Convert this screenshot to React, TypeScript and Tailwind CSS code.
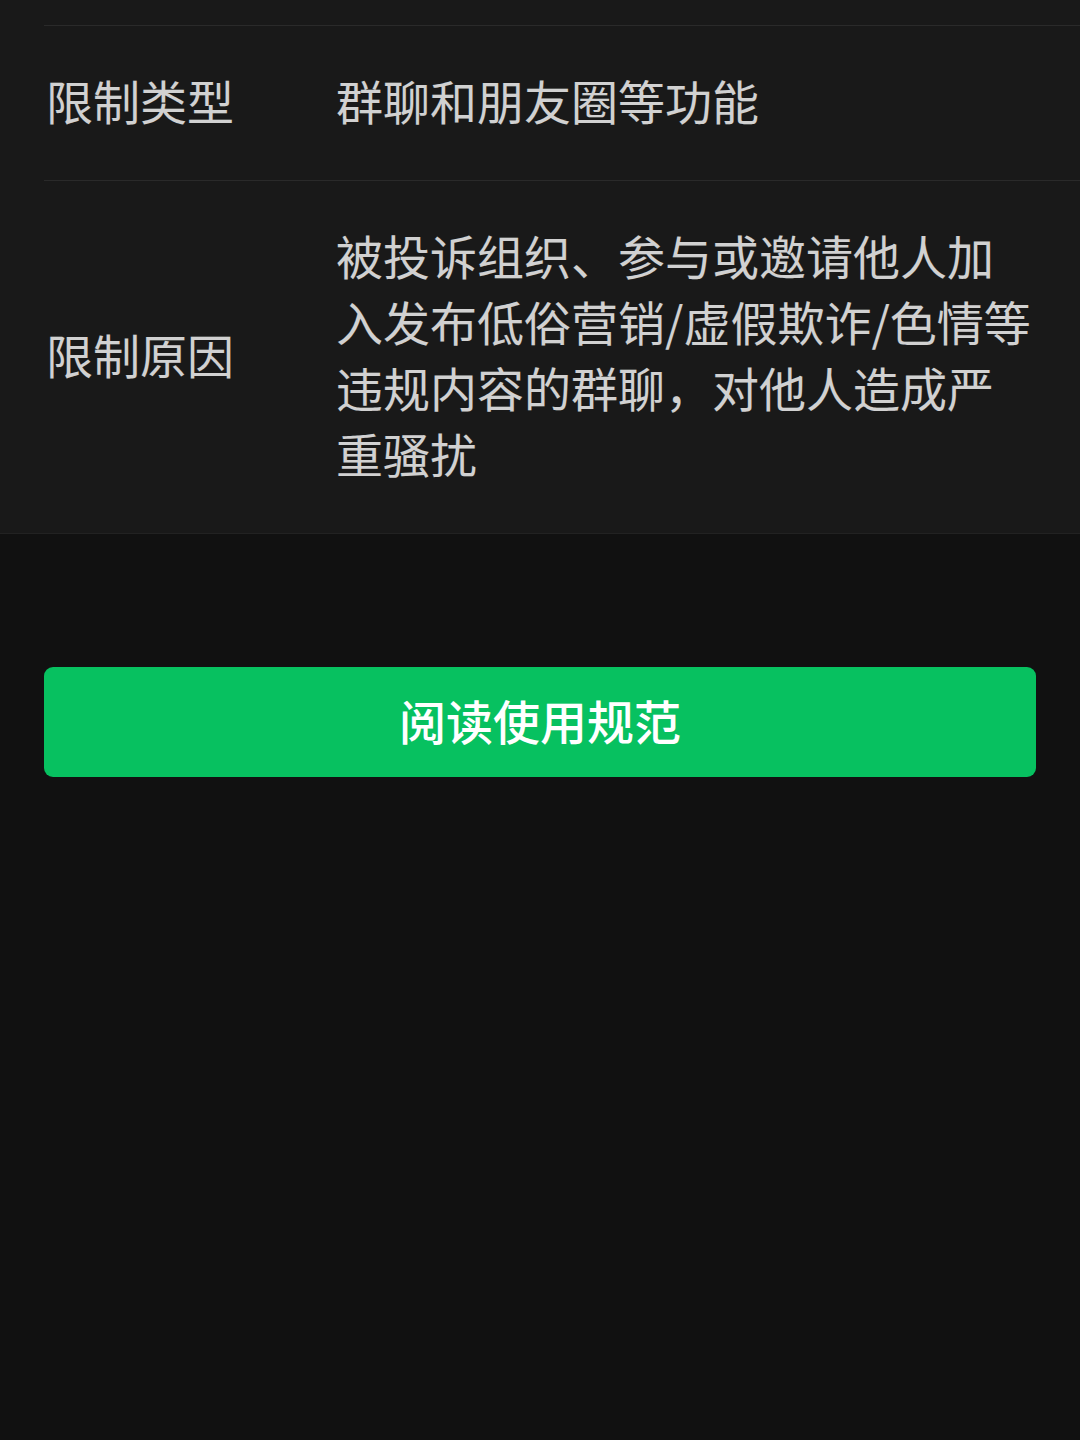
const rows = [
  { label: '限制类型', lines: ['群聊和朋友圈等功能'] },
  {
    label: '限制原因',
    lines: [
      '被投诉组织、参与或邀请他人加',
      '入发布低俗营销/虚假欺诈/色情等',
      '违规内容的群聊，对他人造成严',
      '重骚扰',
    ],
  },
];

export default function App() {
  return (
    <div
      className="min-h-[1440px] bg-[#111111] text-white/80"
      style={{ fontFamily: '"Noto Sans CJK SC", "Noto Sans", sans-serif' }}
    >
      <div className="bg-[#191919] border-b border-[#222222] pt-[25px]">
        {rows.map((row) => (
          <div key={row.label} className="ml-[44px] border-t border-[#2a2a2a]">
            <div className="flex items-center pt-[41px] pb-[47px] text-[47px] leading-[66px]">
              <div className="w-[292px] shrink-0 pl-[2px]">{row.label}</div>
              <div className="flex flex-col">
                {row.lines.map((line) => (
                  <span key={line} className="whitespace-nowrap">
                    {line}
                  </span>
                ))}
              </div>
            </div>
          </div>
        ))}
      </div>

      <div className="px-[44px] pt-[133px]">
        <button className="flex h-[110px] w-full items-center justify-center rounded-[9px] bg-[#07c160] pb-[4px] text-[47px] font-medium text-white">
          阅读使用规范
        </button>
      </div>
    </div>
  );
}
